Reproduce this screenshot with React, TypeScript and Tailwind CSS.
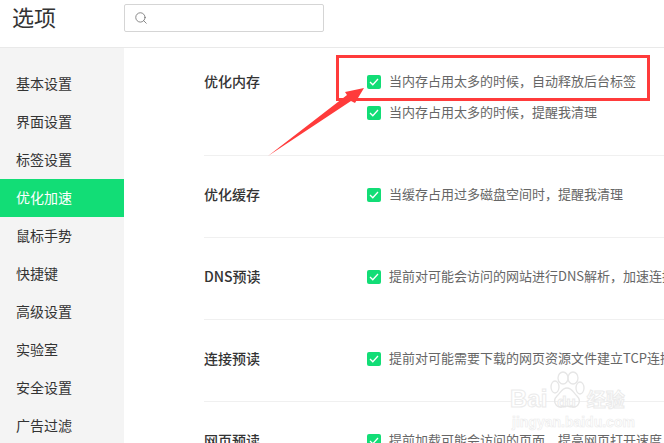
import { Search } from "lucide-react";

const navItems = ["基本设置", "界面设置", "标签设置", "优化加速", "鼠标手势", "快捷键", "高级设置", "实验室", "安全设置", "广告过滤"];

const sections = [
  { title: "优化内存", rows: ["当内存占用太多的时候，自动释放后台标签", "当内存占用太多的时候，提醒我清理"] },
  { title: "优化缓存", rows: ["当缓存占用过多磁盘空间时，提醒我清理"] },
  { title: "DNS预读", rows: ["提前对可能会访问的网站进行DNS解析，加速连接"] },
  { title: "连接预读", rows: ["提前对可能需要下载的网页资源文件建立TCP连接，加速下载"] },
  { title: "网页预读", rows: ["提前加载可能会访问的页面，提高网页打开速度"] },
];

function CheckRow({ text }: { text: string }) {
  return (
    <div className="flex h-5 items-center whitespace-nowrap">
      <span className="flex h-[14px] w-[14px] shrink-0 items-center justify-center rounded-[2px] bg-[#12dd76]">
        <svg width="10" height="8" viewBox="0 0 10 8" fill="none" stroke="white" strokeWidth="1.3">
          <polyline points="1,4 3.8,6.8 9,1" />
        </svg>
      </span>
      <span className="ml-2 pb-[2px] text-[13px] leading-[18px] text-[#666666]">{text}</span>
    </div>
  );
}

export default function App() {
  return (
    <div className="relative h-[443px] w-[664px] overflow-hidden bg-white font-['Noto_Sans_CJK_SC',sans-serif]">
      <header className="flex h-12 items-start border-b border-[#e9e9e9] pt-1">
        <div className="w-[124px] pl-3 text-[22px] leading-[24px] text-[#333333]">选项</div>
        <div className="flex h-[28px] w-[200px] items-center rounded-[2px] border border-[#d5d5d5] pl-[9px]">
          <Search size={14} strokeWidth={1.3} className="text-[#666666]" />
        </div>
      </header>

      <div className="flex h-[395px]">
        <nav className="w-[124px] shrink-0 bg-[#f4f4f4] pt-[17px]">
          {navItems.map((item) => (
            <div
              key={item}
              className={
                item === "优化加速"
                  ? "flex h-[38px] items-center bg-[#12dd76] pb-[2px] pl-4 text-sm text-white"
                  : "flex h-[38px] items-center pb-[2px] pl-4 text-sm text-[#333333]"
              }
            >
              {item}
            </div>
          ))}
        </nav>

        <main className="ml-20 w-[460px] shrink-0">
          {sections.map((section, i) => (
            <section
              key={section.title}
              className={
                i === 0
                  ? "flex border-b border-[#f0f0f0] pt-6 pb-8"
                  : "flex border-b border-[#f0f0f0] pt-[29px] pb-8"
              }
            >
              <h2 className="w-[163px] shrink-0 pb-[2px] text-sm leading-[18px] font-medium text-[#333333]">{section.title}</h2>
              <div className="flex flex-col gap-[11px]">
                {section.rows.map((row) => (
                  <CheckRow key={row} text={row} />
                ))}
              </div>
            </section>
          ))}
        </main>
      </div>

      {/* annotation over the screenshot */}
      <div className="absolute top-[55px] left-[336px] h-[46px] w-[314px] border-[3px] border-[#ff3b3b]" />
      <svg className="absolute top-0 left-0" width="664" height="443" fill="#ff3b3b">
        <polygon points="268,156 347,95 345,92 364,88 355,103 351,101" />
      </svg>

      {/* baidu watermark */}
      <div className="absolute top-[387px] left-[510px] w-[130px] leading-none text-white">
        <div className="flex items-baseline [-webkit-text-stroke:1px_#ebebeb]">
          <span className="font-['Liberation_Sans',sans-serif] text-[24px] font-bold">Bai</span>
          <span className="ml-[10px] font-['Liberation_Sans',sans-serif] text-[15px] font-bold">du</span>
          <span className="ml-[11px] text-[19px] font-bold">经验</span>
        </div>
        <div className="mt-[4px] ml-[2px] font-['Liberation_Sans',sans-serif] text-[14px] font-bold [-webkit-text-stroke:0.6px_#ebebeb]">jingyan.baidu.com</div>
      </div>
      <svg className="absolute top-[370px] left-[548px]" width="40" height="40" fill="none" stroke="#e6e6e6" strokeWidth="1.3">
        <ellipse cx="7" cy="17" rx="4" ry="6" />
        <ellipse cx="15" cy="8" rx="5" ry="6" />
        <ellipse cx="25" cy="8" rx="5" ry="6" />
        <ellipse cx="32" cy="18" rx="4" ry="6" />
        <path d="M19 18c-5 0-6 4-10 8-5 5-1 12 5 11 3-1 7-1 10 0 6 1 10-6 5-11-4-4-5-8-10-8z" />
      </svg>
    </div>
  );
}
